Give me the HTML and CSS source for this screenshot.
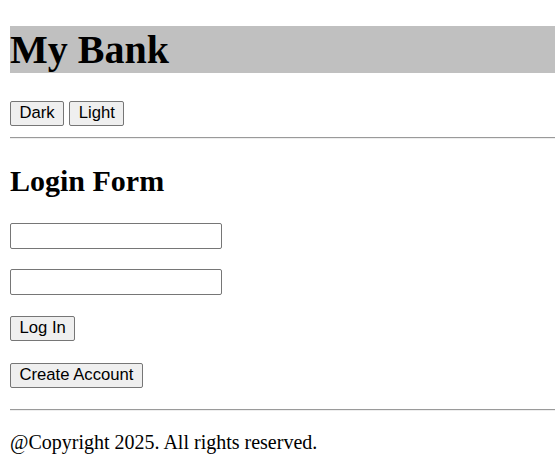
FILE: index.html
```html
<!DOCTYPE html>
<html>
<head>
<meta charset="utf-8">
<title>My Bank</title>
<link rel="stylesheet" href="styles.css">
</head>
<body>
<header>
<h1 class="title">My Bank</h1>
<div class="theme-row"><button class="btn">Dark</button> <button class="btn">Light</button></div>
</header>
<hr class="rule">
<main>
<h2 class="subtitle">Login Form</h2>
<form class="login">
<p class="field"><input class="text-input" type="text"></p>
<p class="field"><input class="text-input" type="password"></p>
<p class="field"><button class="btn" type="button">Log In</button></p>
<p class="field"><button class="btn" type="button">Create Account</button></p>
</form>
</main>
<hr class="rule">
<footer>
<p class="copy">@Copyright 2025. All rights reserved.</p>
</footer>
</body>
</html>
```
FILE: styles.css
```css
html, body {
  background: #ffffff;
}
body {
  margin: 0 0 0 10px;
  padding: 0;
  font-family: "Liberation Serif", "Times New Roman", serif;
  font-size: 20px;
  color: #000;
}
.title {
  font-size: 40px;
  font-weight: bold;
  margin: 26px 0 26.8px;
  background: #c0c0c0;
}
.theme-row {
  margin: 0;
}
.btn {
  font-family: "Liberation Sans", Arial, sans-serif;
  font-size: 16.67px;
  color: #000;
  background: #efefef;
  border: 1px solid #767676;
  border-radius: 2px;
  padding: 1px 8.5px;
  height: 25px;
  line-height: normal;
  margin: 1px 0;
}
.rule {
  margin: 10px 0;
  border: 0;
  border-top: 1px solid #9a9a9a;
  border-bottom: 1px solid #eeeeee;
  height: 0;
}
.subtitle {
  font-size: 30px;
  font-weight: bold;
  margin: 24.9px 0;
}
.login {
  margin: 0;
}
.field {
  margin: 20px 0;
}
.text-input {
  box-sizing: border-box;
  width: 212px;
  height: 26px;
  border: 1px solid #767676;
  border-radius: 2px;
  padding: 1px 2px;
  margin: 0;
  font-size: 16.67px;
  font-family: "Liberation Sans", Arial, sans-serif;
  background: #fff;
}
.copy {
  margin: 20px 0 0;
}
```
